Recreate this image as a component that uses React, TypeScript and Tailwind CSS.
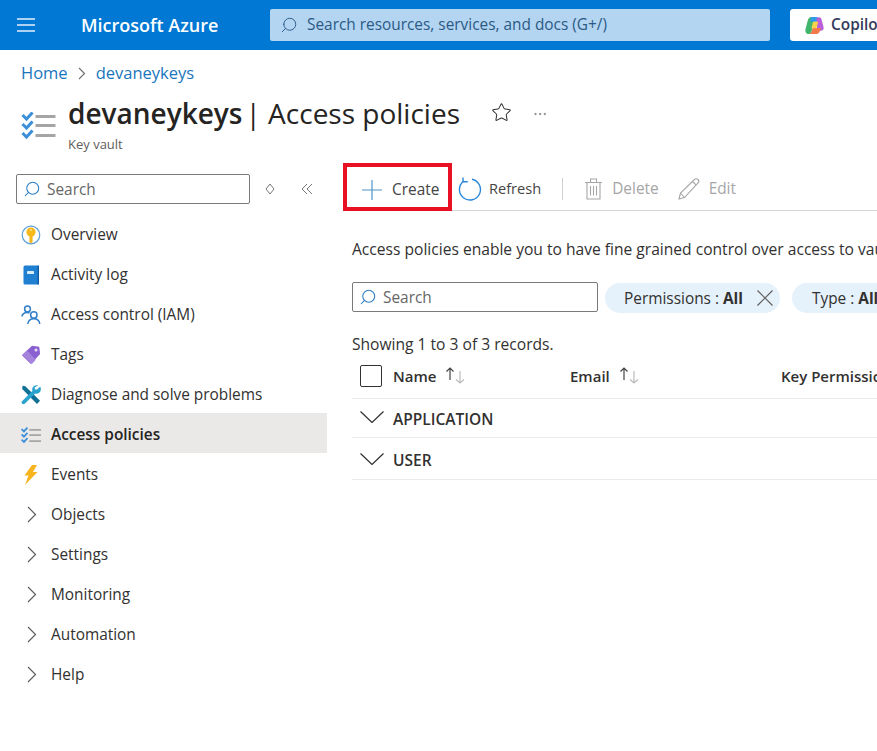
import type { ReactNode } from "react";
import { Ellipsis, Search, Star } from "lucide-react";

const fontStack = { fontFamily: '"Open Sans", "Noto Sans", sans-serif' };

const ChecklistIcon = ({ className }: { className: string }) => (
  <svg className={className} viewBox="0 0 34 28" fill="none">
    {[3, 12, 21].map((y) => (
      <path d={`M1 ${y}l4 4 6-6.5`} key={y} stroke="#3b8fd9" strokeWidth="3" />
    ))}
    {[3, 12, 22].map((y) => (
      <rect fill="#a5a5a5" height="3" key={y} rx="0.5" width="20" x="14" y={y} />
    ))}
  </svg>
);

const KeyIcon = () => (
  <svg className="size-5" viewBox="0 0 20 20">
    <circle cx="10" cy="10" fill="#fff" r="8.8" stroke="#5ea0d8" strokeWidth="1.2" />
    <circle cx="10" cy="7" fill="#f5b81d" r="4.6" />
    <path d="M8.4 10h3.2v7.2l-1.6 1-1.6-1z" fill="#f5b81d" />
    <circle cx="10" cy="5" fill="#fce08a" r="1.1" />
  </svg>
);

const BookIcon = () => (
  <svg className="size-5" viewBox="0 0 20 20">
    <rect fill="#1f7fd1" height="19" rx="1.5" width="15.5" x="2.5" y="0.5" />
    <rect fill="#0f5fa8" height="19" width="1.5" x="16.5" y="0.5" />
    <rect fill="#d8ecfa" height="3" rx="0.4" width="7" x="6" y="6" />
  </svg>
);

const PeopleIcon = () => (
  <svg className="size-5" fill="none" stroke="#2f7fc9" strokeWidth="1.5" viewBox="0 0 20 20">
    <circle cx="6.5" cy="4" r="2.9" />
    <path d="M.8 11.5C1.5 8.8 3.6 7.4 6 7.4c1 0 1.8.2 2.5.6" />
    <circle cx="12.8" cy="10" r="3.2" />
    <path d="M6.8 19c.4-3 2.8-5.2 6-5.2s5.6 2.2 6 5.2" />
  </svg>
);

const TagIcon = () => (
  <svg className="size-5" viewBox="0 0 20 20">
    <path d="M11 .8l7.2.9.9 7.4-9.3 10L1 10.3z" fill="#8a5fd0" />
    <path d="M1 10.3l9.8 8.8 4-4.3L6 5.2z" fill="#a583dd" />
    <circle cx="15" cy="5" fill="#e9def8" r="1.5" />
  </svg>
);

const ToolsIcon = () => (
  <svg className="size-5" viewBox="0 0 20 20">
    <path d="M1.5.8l2.8.5L19 15.8 16 19 1.2 4z" fill="#0f6f95" />
    <path d="M19.2 1.5l-3.4 3.2-1.8-.4-.4-1.8L17 .5c-2.2-.8-4.6.2-5.5 2.3-.4 1-.4 2 0 2.9L1 16.2c-.6.7-.6 1.6 0 2.2l.4.4c.7.6 1.6.6 2.3 0L14.2 8.4c2.3.8 4.9-.5 5.500-3 .3-1.400.1-2.800-.5-3.900z" fill="#2aa3cf" />
  </svg>
);

const BoltIcon = () => (
  <svg className="h-5 w-[14px]" viewBox="0 0 14 20">
    <path d="M8 0h5L9 7h4.5L1 20l3.5-9.5H.5z" fill="#f8b41e" />
  </svg>
);

const CopilotIcon = () => (
  <svg className="size-[19px]" viewBox="0 0 20 20">
    <path d="M6.5 1H12L9 9l-2 7c-.5 2-2 3-3.5 3C1 19 0 16.5.5 14L3 4.5C3.5 2.3 4.8 1 6.5 1z" fill="#42b56c" />
    <path d="M6.5 1H12c1.3 0 2.5.8 3 2.5L15.5 6H5.5L6 3z" fill="#2f9ae8" />
    <path d="M12 3.5C12.8 1 16.5.2 17.5 4l2 7.5c.6 2.400-.8 4-3 4H13z" fill="#b95fdc" />
    <path d="M8 12.5h8.500c-.5 4-2 6.500-5.500 6.500H4c2 0 3.500-3 4-6.500z" fill="#f4794a" />
    <path d="M8.5 6h5.500l-2 7H6.800z" fill="#f7d24a" />
  </svg>
);

const LineIcon = ({ className, stroke, width, height, d }: { className?: string; stroke: string; width: number; height: number; d: string }) => (
  <svg className={`shrink-0 ${className ?? ""}`} fill="none" height={height} stroke={stroke} strokeWidth="1.2" viewBox={`0 0 ${width} ${height}`} width={width}>
    <path d={d} />
  </svg>
);

const SortArrows = () => (
  <span className="ml-[9px] flex h-4 items-start">
    <LineIcon className="-mt-[1px]" d="M5 13V1M1.5 4.5 5 1l3.5 3.5" height={13} stroke="#444" width={10} />
    <LineIcon className="mt-[3px] -ml-[1px]" d="M6 0v12M2 8.5 6 12l4-3.5" height={13} stroke="#bbb" width={12} />
  </span>
);

const SearchBox = ({ className }: { className: string }) => (
  <div className={`flex shrink-0 items-center rounded-[2px] border border-[#7b7a78] pl-[6px] ${className}`}>
    <Search className="size-[18px] -scale-x-100 text-[#2b7cc4]" strokeWidth={1.4} />
    <span className="ml-[6px] pt-[2px] text-[#666]">Search</span>
  </div>
);

const NavItem = ({ icon, label, active }: { icon: ReactNode; label: string; active?: boolean }) => (
  <div className={`flex h-10 items-center pl-[21px] pt-[4px] ${active ? "bg-[#ebe9e7] font-semibold text-[#252423]" : ""}`}>
    <span className="flex w-[30px] shrink-0 items-center">{icon}</span>
    {label}
  </div>
);

const groupChevron = <LineIcon className="ml-[6px] -mt-[2px]" d="M1 1l7.5 7.5L1 16" height={17} stroke="#605e5c" width={10} />;

const navItems = [
  { label: "Overview", icon: <KeyIcon /> },
  { label: "Activity log", icon: <BookIcon /> },
  { label: "Access control (IAM)", icon: <PeopleIcon /> },
  { label: "Tags", icon: <TagIcon /> },
  { label: "Diagnose and solve problems", icon: <ToolsIcon /> },
  { label: "Access policies", icon: <ChecklistIcon className="h-[17px] w-5" />, active: true },
  { label: "Events", icon: <span className="pl-[3px]"><BoltIcon /></span> },
  { label: "Objects", icon: groupChevron },
  { label: "Settings", icon: groupChevron },
  { label: "Monitoring", icon: groupChevron },
  { label: "Automation", icon: groupChevron },
  { label: "Help", icon: groupChevron },
];

const GroupRow = ({ label, className }: { label: string; className: string }) => (
  <div className={`flex items-center border-b border-[#edebe9] pl-[8px] text-[15.5px] font-semibold text-[#323130] ${className}`}>
    <LineIcon className="-mt-[5px] mr-[9px]" d="M.5.5 12 11.5 23.5.5" height={12} stroke="#323130" width={24} />
    {label}
  </div>
);

export default function App() {
  return (
    <div className="h-[751px] w-[877px] overflow-hidden bg-white text-[15.4px] text-[#323130]" style={fontStack}>
      <header className="flex h-[50px] items-center bg-[#0078d4]">
        <svg className="ml-[17px] shrink-0" fill="none" height="14" stroke="#e3f0fb" strokeWidth="1.3" viewBox="0 0 18 14" width="18">
          <path d="M0 1h18M0 7h18M0 13h18" />
        </svg>
        <span className="ml-[46px] w-[189px] shrink-0 text-[18px] font-semibold text-white">Microsoft Azure</span>
        <div className="flex h-8 w-[500px] shrink-0 items-center rounded-[2px] bg-[#b3d5f2] pl-[10px] text-[#2b5a85]">
          <Search className="size-[18px] -scale-x-100" strokeWidth={1.25} />
          <span className="ml-[9px]">Search resources, services, and docs (G+/)</span>
        </div>
        <div className="ml-5 flex h-8 w-[120px] shrink-0 items-center rounded-[3px] bg-white pl-[15px] font-semibold text-[#323a5a]">
          <CopilotIcon />
          <span className="ml-[7px]">Copilot</span>
        </div>
      </header>

      <nav className="flex h-[46px] items-center pl-[21px] pt-[1px] text-[16.5px] text-[#1a76bd]">
        Home
        <LineIcon className="mx-[10px]" d="M1 1l5.5 5.5L1 12" height={13} stroke="#737373" width={8} />
        devaneykeys
      </nav>

      <div className="flex h-[68px] items-start pl-[21px]">
        <ChecklistIcon className="mt-[16px] h-[28px] w-[35px] shrink-0" />
        <div className="ml-[12px]">
          <h1 className="-mt-[1px] flex h-[36px] items-center whitespace-nowrap text-[28px] leading-none text-[#252423]">
            <span className="font-semibold">devaneykeys</span>
            <span className="ml-[3px]">| Access policies</span>
          </h1>
          <div className="mt-[4px] text-[13px] leading-[18px] text-[#605e5c]">Key vault</div>
        </div>
        <Star className="ml-[31px] mt-[6px] size-[21px] text-[#323130]" strokeWidth={1.15} />
        <Ellipsis className="ml-[20px] mt-[10px] size-4 text-[#605e5c]" strokeWidth={1} />
      </div>

      <div className="flex">
        <aside className="w-[327px] shrink-0">
          <div className="flex h-[46px] items-center pl-[16px] pt-[4px]">
            <SearchBox className="h-[30px] w-[234px]" />
            <svg className="ml-[15px] h-[12px] w-[10px]" fill="none" stroke="#777" viewBox="0 0 10 12">
              <path d="M5 1 9 6 5 11 1 6z" />
            </svg>
            <svg className="ml-[26px]" fill="none" height="12" stroke="#777" viewBox="0 0 12 12" width="12">
              <path d="M6 1 1 6l5 5M11 1 6 6l5 5" />
            </svg>
          </div>
          <div className="mt-[3px]">
            {navItems.map((item) => (
              <NavItem {...item} key={item.label} />
            ))}
          </div>
        </aside>

        <main className="min-w-0 flex-1">
          <div className="ml-[17px] flex h-[47px] items-center border-b border-[#d6d6d6]">
            <div className="-ml-[1px] flex h-[48px] w-[109px] shrink-0 items-center border-[4px] border-[#e81123] pl-[15px] pt-[5px]">
              <LineIcon d="M10 0v20M0 10h20" height={20} stroke="#4f95c9" width={20} />
              <span className="ml-[10px] text-[#444]">Create</span>
            </div>
            <div className="flex items-center pt-[4px]">
              <svg className="ml-[6px] shrink-0" fill="none" height="24" stroke="#2b88d8" strokeWidth="1.4" viewBox="0 0 24 24" width="24">
                <path d="M14 2.2A10.5 10.5 0 1 1 5.5 4.2" />
                <path d="M5 .5v4.2h4.8" />
              </svg>
              <span className="ml-[7px] text-[14.6px] text-[#444]">Refresh</span>
              <span className="ml-[21px] h-[22px] w-px bg-[#d0d0d0]" />
              <svg className="ml-[22px] shrink-0" fill="none" height="22" stroke="#a6a6a6" strokeWidth="1.1" viewBox="0 0 17 22" width="17">
                <path d="M0 4.5h17M5.5 4.5V1h6v3.5M2 4.5V21h13V4.5M5.5 8v9.5M8.5 8v9.5M11.5 8v9.5" />
              </svg>
              <span className="ml-[10px] text-[#a6a6a6]">Delete</span>
              <svg className="ml-[19px] shrink-0" fill="none" height="22" stroke="#a6a6a6" strokeWidth="1.1" viewBox="0 0 22 22" width="22">
                <path d="M1 21l1.5-6L16.5 1.5c1-1 2.5-1 3.5 0s1 2.5 0 3.5L6.500 19.500zM2.500 15l4 4.500M14.500 3.500l4 3.800" />
              </svg>
              <span className="ml-[9px] text-[#a6a6a6]">Edit</span>
            </div>
          </div>

          <div className="pl-[25px]">
            <p className="mt-[26px] whitespace-nowrap text-[15.6px] leading-[24px]">
              Access policies enable you to have fine grained control over access to vault items.
            </p>
            <div className="mt-[21px] flex items-start">
              <SearchBox className="h-[30px] w-[246px]" />
              <div className="ml-[7px] mt-[1px] flex h-[30px] w-[175px] shrink-0 items-center rounded-full bg-[#e5f1fb] pl-[19px] pt-[1px]">
                Permissions :&nbsp;<b className="font-bold">All</b>
                <LineIcon className="ml-[14px] -mt-[1px]" d="M.5.5l15 15M15.5.5l-15 15" height={16} stroke="#605e5c" width={16} />
              </div>
              <div className="ml-[12px] mt-[1px] flex h-[30px] w-[175px] shrink-0 items-center rounded-full bg-[#e5f1fb] pl-[20px] pt-[1px]">
                Type :&nbsp;<b className="font-bold">All</b>
              </div>
            </div>
            <div className="mt-[19px] text-[15.6px] leading-[24px]">Showing 1 to 3 of 3 records.</div>
            <div className="flex h-[43px] items-center whitespace-nowrap border-b border-[#edebe9] pb-[2px] text-[15px] font-semibold text-[#323130]">
              <span className="ml-[8px] size-[22px] shrink-0 rounded-[2px] border border-[#323130]" />
              <span className="ml-[11px] flex w-[177px] shrink-0 items-center">Name<SortArrows /></span>
              <span className="flex w-[211px] shrink-0 items-center">Email<SortArrows /></span>
              <span>Key Permissions</span>
            </div>
            <GroupRow className="h-[39px] pt-[3px]" label="APPLICATION" />
            <GroupRow className="h-[42px] pt-[5px]" label="USER" />
          </div>
        </main>
      </div>
    </div>
  );
}
